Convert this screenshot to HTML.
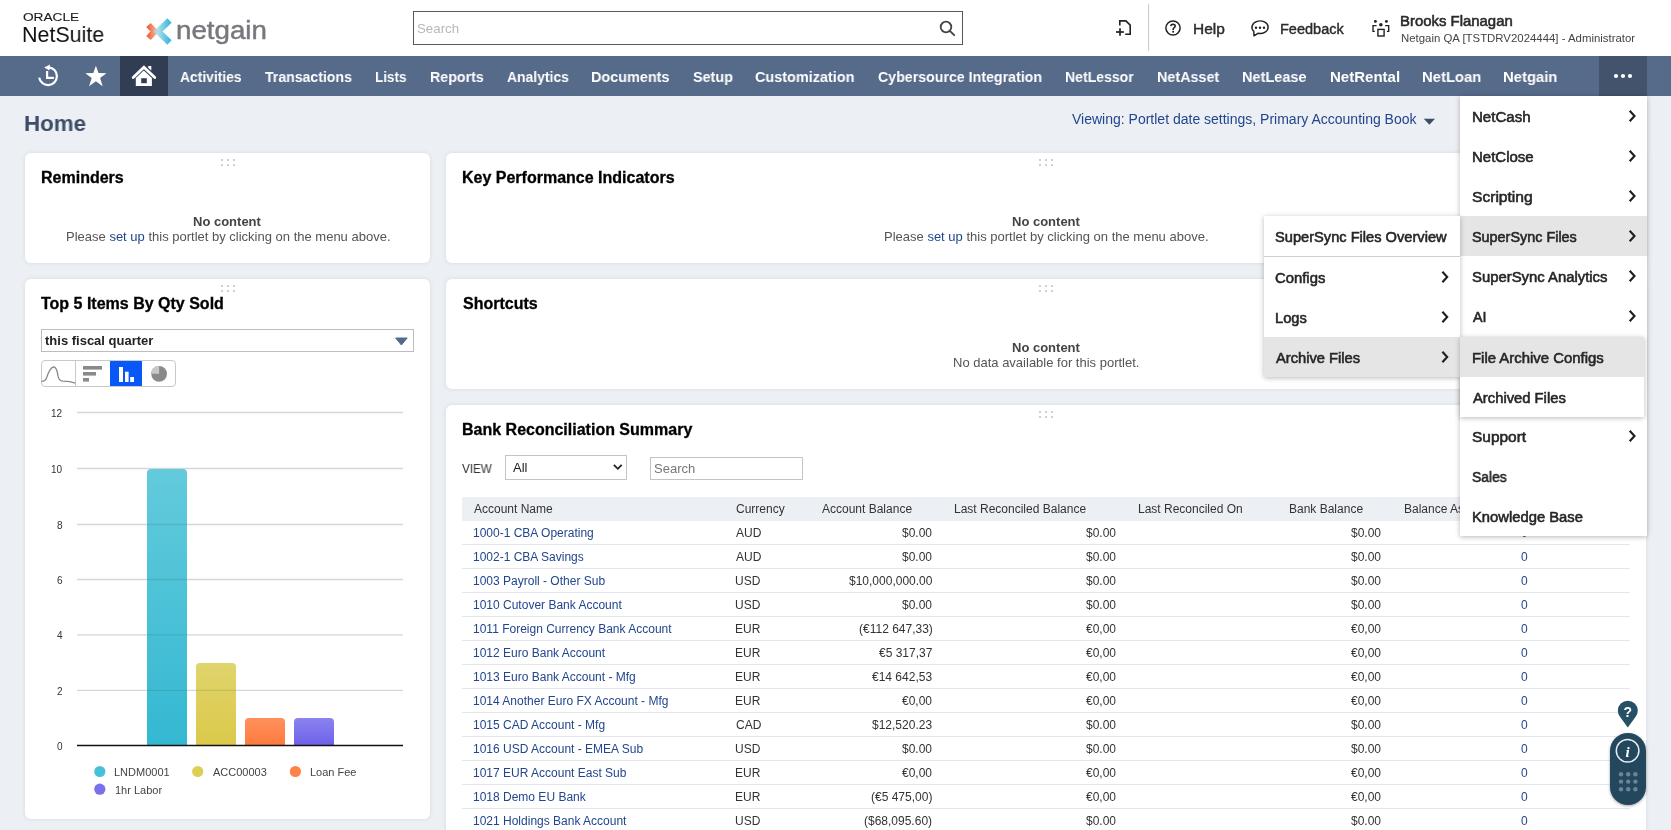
<!DOCTYPE html><html><head><meta charset="utf-8"><style>
*{margin:0;padding:0;box-sizing:border-box}
html,body{width:1671px;height:830px;overflow:hidden;background:#eceff3;font-family:"Liberation Sans",sans-serif}
.t{position:absolute;white-space:nowrap;line-height:1;transform-origin:0 0;will-change:transform}
svg{position:absolute;overflow:visible}
.card{position:absolute;background:#fff;border-radius:6px;box-shadow:0 0 5px rgba(0,0,0,.09)}
</style></head><body>

<div style="position:absolute;left:0px;top:0px;width:1671px;height:56px;background:#fff"></div>
<div class="t " style="left:23.32px;top:13px;font-size:10px;color:#1a1a1a;-webkit-text-stroke:0.1px #1a1a1a;transform:scaleX(1.3648);">ORACLE</div>
<div class="t " style="left:22.29px;top:25px;font-size:21.5px;color:#111;transform:scaleX(0.9967);">NetSuite</div>
<svg style="left:0;top:0" width="300" height="56">
<defs>
<linearGradient id="gb" x1="0" y1="0" x2="1" y2="0"><stop offset="0" stop-color="#a9dbe8"/><stop offset="1" stop-color="#2bb5dd"/></linearGradient>
<linearGradient id="go" x1="0" y1="0" x2="1" y2="0"><stop offset="0" stop-color="#f26838"/><stop offset="1" stop-color="#f5a183"/></linearGradient>
</defs>
<polyline points="148.5,25 154.5,31.5 148.5,38" fill="none" stroke="url(#go)" stroke-width="6.2" stroke-linejoin="miter"/>
<polyline points="169.5,20.5 158,31.5 169.5,42.5" fill="none" stroke="url(#gb)" stroke-width="6.2" stroke-linejoin="miter" opacity="0.92"/>
</svg>
<div class="t " style="left:176.06px;top:18px;font-size:25.5px;color:#76787c;-webkit-text-stroke:0.45px #76787c;transform:scaleX(1.0865);">netgain</div>
<div style="position:absolute;left:413px;top:11px;width:550px;height:34px;border:1.5px solid #5a5a5a;background:#fff"></div>
<div class="t " style="left:416.84px;top:22px;font-size:13px;color:#b8b8b8;transform:scaleX(1.0214);">Search</div>
<svg style="left:0;top:0" width="1" height="1"><circle cx="946" cy="27" r="5.3" fill="none" stroke="#444" stroke-width="1.8"/><line x1="949.8" y1="30.8" x2="954.2" y2="35.2" stroke="#444" stroke-width="1.9" stroke-linecap="round"/></svg>
<svg style="left:0;top:0" width="1" height="1">
<path d="M1119.8,25.6 V20.9 H1125.9 L1130.2,25.2 V34.3 H1125.2" fill="none" stroke="#222" stroke-width="1.6"/>
<line x1="1116" y1="32" x2="1123.9" y2="32" stroke="#222" stroke-width="1.7"/>
<line x1="1120" y1="28.2" x2="1120" y2="35.8" stroke="#222" stroke-width="1.7"/>
<line x1="1148.6" y1="4" x2="1148.6" y2="51" stroke="#c8c8c8" stroke-width="1"/>
<circle cx="1173" cy="28" r="7.1" fill="none" stroke="#222" stroke-width="1.5"/>
<path d="M1170.8,26.1 Q1170.9,24.3 1173.1,24.3 Q1175.3,24.4 1175.2,26.1 Q1175.1,27.2 1173.9,27.9 Q1173.1,28.4 1173.1,29.9" fill="none" stroke="#222" stroke-width="1.6"/>
<circle cx="1173.1" cy="31.7" r="1" fill="#222"/>
<path d="M1253.8,31.25 A8.1,6.3 0 1 1 1257.9,33.3 L1254,35.8 Z" fill="none" stroke="#222" stroke-width="1.45" stroke-linejoin="round"/>
<circle cx="1256" cy="27.7" r="1.2" fill="#222"/><circle cx="1260" cy="27.7" r="1.2" fill="#222"/><circle cx="1264" cy="27.7" r="1.2" fill="#222"/>
<circle cx="1375.4" cy="21.4" r="1.45" fill="#222"/><circle cx="1380.85" cy="24.8" r="1.8" fill="#222"/><circle cx="1386.4" cy="21.4" r="1.45" fill="#222"/>
<path d="M1376.6,25.6 H1373 V31.3 H1374.8" fill="none" stroke="#222" stroke-width="1.35"/>
<path d="M1385.1,25.6 H1388.7 V31.3 H1386.9" fill="none" stroke="#222" stroke-width="1.35"/>
<rect x="1377.9" y="29.4" width="6.2" height="6.6" fill="none" stroke="#222" stroke-width="1.4"/>
</svg>
<div class="t " style="left:1192.76px;top:22px;font-size:14px;color:#2b2b2b;-webkit-text-stroke:0.4px #2b2b2b;transform:scaleX(1.1046);">Help</div>
<div class="t " style="left:1280.24px;top:22px;font-size:14px;color:#2b2b2b;-webkit-text-stroke:0.4px #2b2b2b;transform:scaleX(1.0375);">Feedback</div>
<div class="t " style="left:1400.31px;top:14px;font-size:14px;color:#2b2b2b;-webkit-text-stroke:0.55px #2b2b2b;transform:scaleX(1.0652);">Brooks Flanagan</div>
<div class="t " style="left:1400.59px;top:33px;font-size:11px;color:#444;transform:scaleX(1.0358);">Netgain QA [TSTDRV2024444] - Administrator</div>
<div style="position:absolute;left:0px;top:56px;width:1671px;height:40px;background:#566a8a"></div>
<div style="position:absolute;left:120px;top:56px;width:48px;height:40px;background:#313d52"></div>
<div style="position:absolute;left:1599px;top:56px;width:48px;height:40px;background:#44536c"></div>
<div class="t " style="left:179.58px;top:69px;font-size:15px;color:#fff;font-weight:bold;transform:scaleX(0.9239);">Activities</div>
<div class="t " style="left:265.16px;top:69px;font-size:15px;color:#fff;font-weight:bold;transform:scaleX(0.9390);">Transactions</div>
<div class="t " style="left:375.06px;top:69px;font-size:15px;color:#fff;font-weight:bold;transform:scaleX(0.8969);">Lists</div>
<div class="t " style="left:429.70px;top:69px;font-size:15px;color:#fff;font-weight:bold;transform:scaleX(0.9500);">Reports</div>
<div class="t " style="left:506.58px;top:69px;font-size:15px;color:#fff;font-weight:bold;transform:scaleX(0.9285);">Analytics</div>
<div class="t " style="left:590.99px;top:69px;font-size:15px;color:#fff;font-weight:bold;transform:scaleX(0.9613);">Documents</div>
<div class="t " style="left:692.57px;top:69px;font-size:15px;color:#fff;font-weight:bold;transform:scaleX(0.9594);">Setup</div>
<div class="t " style="left:755.42px;top:69px;font-size:15px;color:#fff;font-weight:bold;transform:scaleX(0.9622);">Customization</div>
<div class="t " style="left:877.83px;top:69px;font-size:15px;color:#fff;font-weight:bold;transform:scaleX(0.9459);">Cybersource Integration</div>
<div class="t " style="left:1065.02px;top:69px;font-size:15px;color:#fff;font-weight:bold;transform:scaleX(0.9369);">NetLessor</div>
<div class="t " style="left:1157.00px;top:69px;font-size:15px;color:#fff;font-weight:bold;transform:scaleX(0.9569);">NetAsset</div>
<div class="t " style="left:1241.98px;top:69px;font-size:15px;color:#fff;font-weight:bold;transform:scaleX(0.9677);">NetLease</div>
<div class="t " style="left:1329.55px;top:69px;font-size:15px;color:#fff;font-weight:bold;transform:scaleX(1.0007);">NetRental</div>
<div class="t " style="left:1421.56px;top:69px;font-size:15px;color:#fff;font-weight:bold;transform:scaleX(0.9888);">NetLoan</div>
<div class="t " style="left:1503.46px;top:69px;font-size:15px;color:#fff;font-weight:bold;transform:scaleX(0.9887);">Netgain</div>
<svg style="left:0;top:0" width="1" height="1">
<path d="M48.6,67.3 A8.9,8.9 0 1 1 39.2,77.6" fill="none" stroke="#fff" stroke-width="2.2"/>
<polygon points="44.2,67.5 50,64.5 49.4,70.4" fill="#fff"/>
<path d="M47.1,71 V77.8 H53.9" fill="none" stroke="#fff" stroke-width="2.2"/>
<polygon points="95.9,65.8 98.5,73.1 106.5,73.2 100.1,78 102.7,86.3 95.9,81.3 89.1,86.3 91.7,78 85.3,73.2 93.3,73.1" fill="#fff"/>
<path d="M133.2,77.6 L143.9,67.3 L154.8,77.6" fill="none" stroke="#fff" stroke-width="2.8" stroke-linecap="round" stroke-linejoin="miter"/>
<polygon points="148.2,66 151.3,66 151.3,70.6 148.2,67.8" fill="#fff"/>
<path d="M135.8,78 L143.8,70.6 L151.9,78 V86 H135.8 Z" fill="#fff"/>
<rect x="141.2" y="78.2" width="5.6" height="5" fill="#313d52"/>
<circle cx="1616" cy="76" r="2.1" fill="#fff"/><circle cx="1623" cy="76" r="2.1" fill="#fff"/><circle cx="1630" cy="76" r="2.1" fill="#fff"/>
</svg>
<div class="t " style="left:24.24px;top:113px;font-size:22.5px;color:#3d4d69;font-weight:bold;transform:scaleX(0.9921);">Home</div>
<div class="t " style="left:1072.26px;top:112px;font-size:14px;color:#22468e;transform:scaleX(1.0001);">Viewing: Portlet date settings, Primary Accounting Book</div>
<svg style="left:0;top:0" width="1" height="1"><polygon points="1423.8,118.7 1435,118.7 1429.4,124.7" fill="#3d4d69"/></svg>
<div class="card" style="left:25px;top:153px;width:405px;height:110px"></div>
<svg style="left:0;top:0" width="1" height="1"><rect x="221" y="159" width="2" height="2" fill="#d0d0d0"/><rect x="221" y="164" width="2" height="2" fill="#d0d0d0"/><rect x="227" y="159" width="2" height="2" fill="#d0d0d0"/><rect x="227" y="164" width="2" height="2" fill="#d0d0d0"/><rect x="233" y="159" width="2" height="2" fill="#d0d0d0"/><rect x="233" y="164" width="2" height="2" fill="#d0d0d0"/></svg>
<div class="t " style="left:40.78px;top:170px;font-size:16px;color:#000;font-weight:bold;-webkit-text-stroke:0.3px #000;transform:scaleX(1.0005);">Reminders</div>
<div class="t " style="left:193.18px;top:215px;font-size:13px;color:#444;font-weight:bold;">No content</div>
<div class="t" style="left:66px;top:230px;font-size:13px;color:#555">Please <span style="color:#22468e">set up</span> this portlet by clicking on the menu above.</div>
<div class="card" style="left:446px;top:153px;width:1200px;height:110px"></div>
<svg style="left:0;top:0" width="1" height="1"><rect x="1039" y="159" width="2" height="2" fill="#d0d0d0"/><rect x="1039" y="164" width="2" height="2" fill="#d0d0d0"/><rect x="1045" y="159" width="2" height="2" fill="#d0d0d0"/><rect x="1045" y="164" width="2" height="2" fill="#d0d0d0"/><rect x="1051" y="159" width="2" height="2" fill="#d0d0d0"/><rect x="1051" y="164" width="2" height="2" fill="#d0d0d0"/></svg>
<div class="t " style="left:461.98px;top:170px;font-size:16px;color:#000;font-weight:bold;-webkit-text-stroke:0.3px #000;">Key Performance Indicators</div>
<div class="t " style="left:1011.68px;top:215px;font-size:13px;color:#444;font-weight:bold;">No content</div>
<div class="t" style="left:883.70px;top:230px;font-size:13px;color:#555">Please <span style="color:#22468e">set up</span> this portlet by clicking on the menu above.</div>
<div class="card" style="left:25px;top:279px;width:405px;height:540px"></div>
<svg style="left:0;top:0" width="1" height="1"><rect x="221" y="285" width="2" height="2" fill="#d0d0d0"/><rect x="221" y="290" width="2" height="2" fill="#d0d0d0"/><rect x="227" y="285" width="2" height="2" fill="#d0d0d0"/><rect x="227" y="290" width="2" height="2" fill="#d0d0d0"/><rect x="233" y="285" width="2" height="2" fill="#d0d0d0"/><rect x="233" y="290" width="2" height="2" fill="#d0d0d0"/></svg>
<div class="t " style="left:41.14px;top:296px;font-size:16px;color:#000;font-weight:bold;-webkit-text-stroke:0.3px #000;">Top 5 Items By Qty Sold</div>
<div style="position:absolute;left:41px;top:329px;width:373px;height:23px;border:1px solid #bdbdbd;background:#fff"></div>
<div class="t " style="left:45.17px;top:334px;font-size:13px;color:#222;font-weight:bold;">this fiscal quarter</div>
<svg style="left:0;top:0" width="1" height="1"><polygon points="395.6,338 407.2,338 401.4,345" fill="#546a8c" stroke="#546a8c" stroke-width="1" stroke-linejoin="round"/></svg>
<div style="position:absolute;left:41px;top:360px;width:135px;height:27px;border:1px solid #c9c9c9;border-radius:4px;background:#fff;overflow:hidden">
<div style="position:absolute;left:68px;top:0;width:32px;height:27px;background:#0a57f7"></div>
<div style="position:absolute;left:33px;top:0;width:1px;height:27px;background:#c9c9c9"></div>
</div>
<svg style="left:0;top:0" width="1" height="1">
<path d="M41.5,381.3 C44,381.3 45.5,381 46.5,378 C48.5,372 50.5,367 53.5,367 C56.5,367 57.5,372 58,376 C58.5,379 60,381 63,381.2 C68,381.3 72,382 75.2,383.2" fill="none" stroke="#8a8a8a" stroke-width="1.3"/>
<rect x="83" y="366" width="19" height="3.6" fill="#8a8a8a"/>
<rect x="83" y="372" width="13" height="3.6" fill="#8a8a8a"/>
<rect x="83" y="378" width="6" height="3.6" fill="#8a8a8a"/>
<rect x="119" y="367" width="4" height="15" fill="#fff"/>
<rect x="125" y="371.7" width="3.6" height="10.3" fill="#fff"/>
<rect x="130.2" y="377" width="3.8" height="5" fill="#fff"/>
<circle cx="159.1" cy="373.8" r="7.9" fill="#8a8a8a"/>
<path d="M159.1,373.8 V365.9 A7.9,7.9 0 0 0 151.2,373.8 Z" fill="#c8c8c8"/>
</svg>
<svg style="left:0;top:0" width="1" height="1"><defs>
<linearGradient id="b1" x1="0" y1="0" x2="0" y2="1"><stop offset="0" stop-color="#63cbdc"/><stop offset="1" stop-color="#34b8d2"/></linearGradient>
<linearGradient id="b2" x1="0" y1="0" x2="0" y2="1"><stop offset="0" stop-color="#e0d46c"/><stop offset="1" stop-color="#dbc94a"/></linearGradient>
<linearGradient id="b3" x1="0" y1="0" x2="0" y2="1"><stop offset="0" stop-color="#ff915e"/><stop offset="1" stop-color="#fd7a3d"/></linearGradient>
<linearGradient id="b4" x1="0" y1="0" x2="0" y2="1"><stop offset="0" stop-color="#8b84ee"/><stop offset="1" stop-color="#6d60ea"/></linearGradient>
</defs><line x1="77" y1="412.5" x2="403" y2="412.5" stroke="#d3d8d4" stroke-width="1.3"/><line x1="77" y1="468.5" x2="403" y2="468.5" stroke="#d3d8d4" stroke-width="1.3"/><line x1="77" y1="524.5" x2="403" y2="524.5" stroke="#d3d8d4" stroke-width="1.3"/><line x1="77" y1="579.5" x2="403" y2="579.5" stroke="#d3d8d4" stroke-width="1.3"/><line x1="77" y1="634.8" x2="403" y2="634.8" stroke="#d3d8d4" stroke-width="1.3"/><line x1="77" y1="690.3" x2="403" y2="690.3" stroke="#d3d8d4" stroke-width="1.3"/></svg>
<div class="t " style="left:51.30px;top:409px;font-size:10px;color:#333;">12</div>
<div class="t " style="left:51.20px;top:465px;font-size:10px;color:#333;">10</div>
<div class="t " style="left:56.90px;top:521px;font-size:10px;color:#333;">8</div>
<div class="t " style="left:56.90px;top:576px;font-size:10px;color:#333;">6</div>
<div class="t " style="left:56.70px;top:631px;font-size:10px;color:#333;">4</div>
<div class="t " style="left:56.90px;top:687px;font-size:10px;color:#333;">2</div>
<div class="t " style="left:56.80px;top:742px;font-size:10px;color:#333;">0</div>
<svg style="left:0;top:0" width="1" height="1"><path d="M147,745.4 V473 Q147,469 151,469 H183 Q187,469 187,473 V745.4 Z" fill="url(#b1)"/></svg>
<svg style="left:0;top:0" width="1" height="1"><path d="M196,745.4 V667 Q196,663 200,663 H232 Q236,663 236,667 V745.4 Z" fill="url(#b2)"/></svg>
<svg style="left:0;top:0" width="1" height="1"><path d="M245,745.4 V722 Q245,718 249,718 H281 Q285,718 285,722 V745.4 Z" fill="url(#b3)"/></svg>
<svg style="left:0;top:0" width="1" height="1"><path d="M294,745.4 V722 Q294,718 298,718 H330 Q334,718 334,722 V745.4 Z" fill="url(#b4)"/></svg>
<svg style="left:0;top:0" width="1" height="1"><line x1="147" y1="524.5" x2="187" y2="524.5" stroke="rgba(30,60,50,.13)" stroke-width="1.3"/><line x1="147" y1="579.5" x2="187" y2="579.5" stroke="rgba(30,60,50,.13)" stroke-width="1.3"/><line x1="147" y1="634.8" x2="187" y2="634.8" stroke="rgba(30,60,50,.13)" stroke-width="1.3"/><line x1="147" y1="690.3" x2="187" y2="690.3" stroke="rgba(30,60,50,.13)" stroke-width="1.3"/><line x1="196" y1="690.3" x2="236" y2="690.3" stroke="rgba(30,60,50,.13)" stroke-width="1.3"/></svg>
<svg style="left:0;top:0" width="1" height="1"><line x1="77" y1="745.5" x2="403" y2="745.5" stroke="#111" stroke-width="1.4"/></svg>
<svg style="left:0;top:0" width="1" height="1"><circle cx="99.8" cy="771.5" r="5.6" fill="#45c2d7"/><circle cx="197.7" cy="771.5" r="5.6" fill="#ddcf55"/><circle cx="295.4" cy="771.5" r="5.6" fill="#fe8349"/><circle cx="99.8" cy="789.2" r="5.6" fill="#7a70ec"/></svg>
<div class="t " style="left:114.32px;top:767px;font-size:11px;color:#444;">LNDM0001</div>
<div class="t " style="left:213.00px;top:767px;font-size:11px;color:#444;">ACC00003</div>
<div class="t " style="left:309.62px;top:767px;font-size:11px;color:#444;">Loan Fee</div>
<div class="t " style="left:114.62px;top:785px;font-size:11px;color:#444;">1hr Labor</div>
<div class="card" style="left:446px;top:279px;width:1200px;height:110px"></div>
<svg style="left:0;top:0" width="1" height="1"><rect x="1039" y="285" width="2" height="2" fill="#d0d0d0"/><rect x="1039" y="290" width="2" height="2" fill="#d0d0d0"/><rect x="1045" y="285" width="2" height="2" fill="#d0d0d0"/><rect x="1045" y="290" width="2" height="2" fill="#d0d0d0"/><rect x="1051" y="285" width="2" height="2" fill="#d0d0d0"/><rect x="1051" y="290" width="2" height="2" fill="#d0d0d0"/></svg>
<div class="t " style="left:462.62px;top:296px;font-size:16px;color:#000;font-weight:bold;-webkit-text-stroke:0.3px #000;">Shortcuts</div>
<div class="t " style="left:1011.68px;top:341px;font-size:13px;color:#444;font-weight:bold;">No content</div>
<div class="t " style="left:952.86px;top:356px;font-size:13px;color:#555;">No data available for this portlet.</div>
<div class="card" style="left:446px;top:405px;width:1200px;height:500px"></div>
<svg style="left:0;top:0" width="1" height="1"><rect x="1039" y="411" width="2" height="2" fill="#d0d0d0"/><rect x="1039" y="416" width="2" height="2" fill="#d0d0d0"/><rect x="1045" y="411" width="2" height="2" fill="#d0d0d0"/><rect x="1045" y="416" width="2" height="2" fill="#d0d0d0"/><rect x="1051" y="411" width="2" height="2" fill="#d0d0d0"/><rect x="1051" y="416" width="2" height="2" fill="#d0d0d0"/></svg>
<div class="t " style="left:461.58px;top:422px;font-size:16px;color:#000;font-weight:bold;-webkit-text-stroke:0.3px #000;">Bank Reconciliation Summary</div>
<div class="t " style="left:462.38px;top:463px;font-size:12px;color:#333;transform:scaleX(0.9744);">VIEW</div>
<div style="position:absolute;left:505px;top:455px;width:122px;height:25px;border:1px solid #c4c4c4;background:#fff"></div>
<div class="t " style="left:513.00px;top:461px;font-size:13px;color:#222;">All</div>
<svg style="left:0;top:0" width="1" height="1"><path d="M613.9,464.8 L617.8,468.8 L621.7,464.8" fill="none" stroke="#222" stroke-width="1.8"/></svg>
<div style="position:absolute;left:650px;top:457px;width:153px;height:23px;border:1px solid #c4c4c4;background:#fff"></div>
<div class="t " style="left:654.05px;top:462px;font-size:13px;color:#777;">Search</div>
<div style="position:absolute;left:462px;top:497px;width:1168px;height:24px;background:#eceff4"></div>
<div class="t " style="left:473.80px;top:503px;font-size:12px;color:#333;">Account Name</div>
<div class="t " style="left:736.00px;top:503px;font-size:12px;color:#333;">Currency</div>
<div class="t " style="left:821.50px;top:503px;font-size:12px;color:#333;">Account Balance</div>
<div class="t " style="left:954.24px;top:503px;font-size:12px;color:#333;">Last Reconciled Balance</div>
<div class="t " style="left:1138.04px;top:503px;font-size:12px;color:#333;">Last Reconciled On</div>
<div class="t " style="left:1289.04px;top:503px;font-size:12px;color:#333;">Bank Balance</div>
<div class="t " style="left:1403.84px;top:503px;font-size:12px;color:#333;">Balance As Of</div>
<svg style="left:0;top:0" width="1" height="1"><line x1="462" y1="544.5" x2="1630" y2="544.5" stroke="#e3e6ec" stroke-width="1"/><line x1="462" y1="568.5" x2="1630" y2="568.5" stroke="#e3e6ec" stroke-width="1"/><line x1="462" y1="592.5" x2="1630" y2="592.5" stroke="#e3e6ec" stroke-width="1"/><line x1="462" y1="616.5" x2="1630" y2="616.5" stroke="#e3e6ec" stroke-width="1"/><line x1="462" y1="640.5" x2="1630" y2="640.5" stroke="#e3e6ec" stroke-width="1"/><line x1="462" y1="664.5" x2="1630" y2="664.5" stroke="#e3e6ec" stroke-width="1"/><line x1="462" y1="688.5" x2="1630" y2="688.5" stroke="#e3e6ec" stroke-width="1"/><line x1="462" y1="712.5" x2="1630" y2="712.5" stroke="#e3e6ec" stroke-width="1"/><line x1="462" y1="736.5" x2="1630" y2="736.5" stroke="#e3e6ec" stroke-width="1"/><line x1="462" y1="760.5" x2="1630" y2="760.5" stroke="#e3e6ec" stroke-width="1"/><line x1="462" y1="784.5" x2="1630" y2="784.5" stroke="#e3e6ec" stroke-width="1"/><line x1="462" y1="808.5" x2="1630" y2="808.5" stroke="#e3e6ec" stroke-width="1"/><line x1="462" y1="832.5" x2="1630" y2="832.5" stroke="#e3e6ec" stroke-width="1"/><line x1="462" y1="856.5" x2="1630" y2="856.5" stroke="#e3e6ec" stroke-width="1"/></svg>
<div class="t " style="left:473.24px;top:527px;font-size:12px;color:#22468e;">1000-1 CBA Operating</div>
<div class="t " style="left:736.30px;top:527px;font-size:12px;color:#333;">AUD</div>
<div class="t " style="left:902.16px;top:527px;font-size:12px;color:#333;">$0.00</div>
<div class="t " style="left:1085.56px;top:527px;font-size:12px;color:#333;">$0.00</div>
<div class="t " style="left:1351.36px;top:527px;font-size:12px;color:#333;">$0.00</div>
<div class="t " style="left:1520.82px;top:527px;font-size:12px;color:#22468e;">0</div>
<div class="t " style="left:473.24px;top:551px;font-size:12px;color:#22468e;">1002-1 CBA Savings</div>
<div class="t " style="left:736.30px;top:551px;font-size:12px;color:#333;">AUD</div>
<div class="t " style="left:902.16px;top:551px;font-size:12px;color:#333;">$0.00</div>
<div class="t " style="left:1085.56px;top:551px;font-size:12px;color:#333;">$0.00</div>
<div class="t " style="left:1351.36px;top:551px;font-size:12px;color:#333;">$0.00</div>
<div class="t " style="left:1520.82px;top:551px;font-size:12px;color:#22468e;">0</div>
<div class="t " style="left:473.24px;top:575px;font-size:12px;color:#22468e;">1003 Payroll - Other Sub</div>
<div class="t " style="left:735.34px;top:575px;font-size:12px;color:#333;">USD</div>
<div class="t " style="left:848.88px;top:575px;font-size:12px;color:#333;">$10,000,000.00</div>
<div class="t " style="left:1085.56px;top:575px;font-size:12px;color:#333;">$0.00</div>
<div class="t " style="left:1351.36px;top:575px;font-size:12px;color:#333;">$0.00</div>
<div class="t " style="left:1520.82px;top:575px;font-size:12px;color:#22468e;">0</div>
<div class="t " style="left:473.24px;top:599px;font-size:12px;color:#22468e;">1010 Cutover Bank Account</div>
<div class="t " style="left:735.34px;top:599px;font-size:12px;color:#333;">USD</div>
<div class="t " style="left:902.16px;top:599px;font-size:12px;color:#333;">$0.00</div>
<div class="t " style="left:1085.56px;top:599px;font-size:12px;color:#333;">$0.00</div>
<div class="t " style="left:1351.36px;top:599px;font-size:12px;color:#333;">$0.00</div>
<div class="t " style="left:1520.82px;top:599px;font-size:12px;color:#22468e;">0</div>
<div class="t " style="left:473.24px;top:623px;font-size:12px;color:#22468e;">1011 Foreign Currency Bank Account</div>
<div class="t " style="left:735.34px;top:623px;font-size:12px;color:#333;">EUR</div>
<div class="t " style="left:858.72px;top:623px;font-size:12px;color:#333;">(€112 647,33)</div>
<div class="t " style="left:1085.56px;top:623px;font-size:12px;color:#333;">€0,00</div>
<div class="t " style="left:1351.36px;top:623px;font-size:12px;color:#333;">€0,00</div>
<div class="t " style="left:1520.82px;top:623px;font-size:12px;color:#22468e;">0</div>
<div class="t " style="left:473.24px;top:647px;font-size:12px;color:#22468e;">1012 Euro Bank Account</div>
<div class="t " style="left:735.34px;top:647px;font-size:12px;color:#333;">EUR</div>
<div class="t " style="left:879.00px;top:647px;font-size:12px;color:#333;">€5 317,37</div>
<div class="t " style="left:1085.56px;top:647px;font-size:12px;color:#333;">€0,00</div>
<div class="t " style="left:1351.36px;top:647px;font-size:12px;color:#333;">€0,00</div>
<div class="t " style="left:1520.82px;top:647px;font-size:12px;color:#22468e;">0</div>
<div class="t " style="left:473.24px;top:671px;font-size:12px;color:#22468e;">1013 Euro Bank Account - Mfg</div>
<div class="t " style="left:735.34px;top:671px;font-size:12px;color:#333;">EUR</div>
<div class="t " style="left:872.28px;top:671px;font-size:12px;color:#333;">€14 642,53</div>
<div class="t " style="left:1085.56px;top:671px;font-size:12px;color:#333;">€0,00</div>
<div class="t " style="left:1351.36px;top:671px;font-size:12px;color:#333;">€0,00</div>
<div class="t " style="left:1520.82px;top:671px;font-size:12px;color:#22468e;">0</div>
<div class="t " style="left:473.24px;top:695px;font-size:12px;color:#22468e;">1014 Another Euro FX Account - Mfg</div>
<div class="t " style="left:735.34px;top:695px;font-size:12px;color:#333;">EUR</div>
<div class="t " style="left:902.16px;top:695px;font-size:12px;color:#333;">€0,00</div>
<div class="t " style="left:1085.56px;top:695px;font-size:12px;color:#333;">€0,00</div>
<div class="t " style="left:1351.36px;top:695px;font-size:12px;color:#333;">€0,00</div>
<div class="t " style="left:1520.82px;top:695px;font-size:12px;color:#22468e;">0</div>
<div class="t " style="left:473.24px;top:719px;font-size:12px;color:#22468e;">1015 CAD Account - Mfg</div>
<div class="t " style="left:735.70px;top:719px;font-size:12px;color:#333;">CAD</div>
<div class="t " style="left:872.28px;top:719px;font-size:12px;color:#333;">$12,520.23</div>
<div class="t " style="left:1085.56px;top:719px;font-size:12px;color:#333;">$0.00</div>
<div class="t " style="left:1351.36px;top:719px;font-size:12px;color:#333;">$0.00</div>
<div class="t " style="left:1520.82px;top:719px;font-size:12px;color:#22468e;">0</div>
<div class="t " style="left:473.24px;top:743px;font-size:12px;color:#22468e;">1016 USD Account - EMEA Sub</div>
<div class="t " style="left:735.34px;top:743px;font-size:12px;color:#333;">USD</div>
<div class="t " style="left:902.16px;top:743px;font-size:12px;color:#333;">$0.00</div>
<div class="t " style="left:1085.56px;top:743px;font-size:12px;color:#333;">$0.00</div>
<div class="t " style="left:1351.36px;top:743px;font-size:12px;color:#333;">$0.00</div>
<div class="t " style="left:1520.82px;top:743px;font-size:12px;color:#22468e;">0</div>
<div class="t " style="left:473.24px;top:767px;font-size:12px;color:#22468e;">1017 EUR Account East Sub</div>
<div class="t " style="left:735.34px;top:767px;font-size:12px;color:#333;">EUR</div>
<div class="t " style="left:902.16px;top:767px;font-size:12px;color:#333;">€0,00</div>
<div class="t " style="left:1085.56px;top:767px;font-size:12px;color:#333;">€0,00</div>
<div class="t " style="left:1351.36px;top:767px;font-size:12px;color:#333;">€0,00</div>
<div class="t " style="left:1520.82px;top:767px;font-size:12px;color:#22468e;">0</div>
<div class="t " style="left:473.24px;top:791px;font-size:12px;color:#22468e;">1018 Demo EU Bank</div>
<div class="t " style="left:735.34px;top:791px;font-size:12px;color:#333;">EUR</div>
<div class="t " style="left:871.20px;top:791px;font-size:12px;color:#333;">(€5 475,00)</div>
<div class="t " style="left:1085.56px;top:791px;font-size:12px;color:#333;">€0,00</div>
<div class="t " style="left:1351.36px;top:791px;font-size:12px;color:#333;">€0,00</div>
<div class="t " style="left:1520.82px;top:791px;font-size:12px;color:#22468e;">0</div>
<div class="t " style="left:473.24px;top:815px;font-size:12px;color:#22468e;">1021 Holdings Bank Account</div>
<div class="t " style="left:735.34px;top:815px;font-size:12px;color:#333;">USD</div>
<div class="t " style="left:864.48px;top:815px;font-size:12px;color:#333;">($68,095.60)</div>
<div class="t " style="left:1085.56px;top:815px;font-size:12px;color:#333;">$0.00</div>
<div class="t " style="left:1351.36px;top:815px;font-size:12px;color:#333;">$0.00</div>
<div class="t " style="left:1520.82px;top:815px;font-size:12px;color:#22468e;">0</div>
<div class="t " style="left:473.24px;top:839px;font-size:12px;color:#22468e;">1022 Test Account</div>
<div class="t " style="left:735.34px;top:839px;font-size:12px;color:#333;">USD</div>
<div class="t " style="left:902.16px;top:839px;font-size:12px;color:#333;">$0.00</div>
<div class="t " style="left:1085.56px;top:839px;font-size:12px;color:#333;">$0.00</div>
<div class="t " style="left:1351.36px;top:839px;font-size:12px;color:#333;">$0.00</div>
<div class="t " style="left:1520.82px;top:839px;font-size:12px;color:#22468e;">0</div>
<svg style="left:0;top:0" width="1" height="1">
<path d="M1627.8,727.5 L1620.5,717.5 A10,10 0 1 1 1635.1,717.5 Z" fill="#265066"/>
<text x="1627.8" y="716.5" font-family="Liberation Sans" font-weight="bold" font-size="14" fill="#fff" text-anchor="middle">?</text>
</svg>
<div style="position:absolute;left:1610px;top:733px;width:36px;height:72px;border-radius:18px;background:#23475d;box-shadow:0 1px 3px rgba(0,0,0,.35)"></div>
<svg style="left:0;top:0" width="1" height="1">
<circle cx="1627.6" cy="750.8" r="11.3" fill="none" stroke="#e8eef2" stroke-width="1.5"/>
<text x="1627.6" y="756.5" font-family="Liberation Serif" font-style="italic" font-weight="bold" font-size="15" fill="#fff" text-anchor="middle">i</text>
<circle cx="1621" cy="774.2" r="2.2" fill="#6c8595"/><circle cx="1621" cy="781.6" r="2.2" fill="#6c8595"/><circle cx="1621" cy="789.2" r="2.2" fill="#6c8595"/><circle cx="1628.2" cy="774.2" r="2.2" fill="#6c8595"/><circle cx="1628.2" cy="781.6" r="2.2" fill="#6c8595"/><circle cx="1628.2" cy="789.2" r="2.2" fill="#6c8595"/><circle cx="1635.4" cy="774.2" r="2.2" fill="#6c8595"/><circle cx="1635.4" cy="781.6" r="2.2" fill="#6c8595"/><circle cx="1635.4" cy="789.2" r="2.2" fill="#6c8595"/>
</svg>
<div style="position:absolute;left:1460px;top:96px;width:187px;height:440px;background:#fff;box-shadow:0 1px 5px rgba(0,0,0,.28)"></div>
<div style="position:absolute;left:1460px;top:216px;width:187px;height:40px;background:#e5e5e5"></div>
<div class="t " style="left:1471.70px;top:110px;font-size:14px;color:#262626;-webkit-text-stroke:0.55px #262626;transform:scaleX(1.0752);">NetCash</div>
<div class="t " style="left:1471.70px;top:150px;font-size:14px;color:#262626;-webkit-text-stroke:0.55px #262626;transform:scaleX(1.0705);">NetClose</div>
<div class="t " style="left:1472.12px;top:190px;font-size:14px;color:#262626;-webkit-text-stroke:0.55px #262626;transform:scaleX(1.1141);">Scripting</div>
<div class="t " style="left:1472.18px;top:230px;font-size:14px;color:#262626;-webkit-text-stroke:0.55px #262626;transform:scaleX(1.0282);">SuperSync Files</div>
<div class="t " style="left:1472.16px;top:270px;font-size:14px;color:#262626;-webkit-text-stroke:0.55px #262626;transform:scaleX(1.0615);">SuperSync Analytics</div>
<div class="t " style="left:1472.90px;top:310px;font-size:14px;color:#262626;-webkit-text-stroke:0.55px #262626;transform:scaleX(1.0216);">AI</div>
<div class="t " style="left:1472.13px;top:430px;font-size:14px;color:#262626;-webkit-text-stroke:0.55px #262626;transform:scaleX(1.1047);">Support</div>
<div class="t " style="left:1472.21px;top:470px;font-size:14px;color:#262626;-webkit-text-stroke:0.55px #262626;transform:scaleX(0.9899);">Sales</div>
<div class="t " style="left:1471.72px;top:510px;font-size:14px;color:#262626;-webkit-text-stroke:0.55px #262626;transform:scaleX(1.0559);">Knowledge Base</div>
<svg style="left:0;top:0" width="1" height="1"><path d="M1629.7,110.8 L1634.5,116 L1629.7,121.2" fill="none" stroke="#1e1e1e" stroke-width="2.1" stroke-linecap="butt"/><path d="M1629.7,150.8 L1634.5,156 L1629.7,161.2" fill="none" stroke="#1e1e1e" stroke-width="2.1" stroke-linecap="butt"/><path d="M1629.7,190.8 L1634.5,196 L1629.7,201.2" fill="none" stroke="#1e1e1e" stroke-width="2.1" stroke-linecap="butt"/><path d="M1629.7,230.8 L1634.5,236 L1629.7,241.2" fill="none" stroke="#1e1e1e" stroke-width="2.1" stroke-linecap="butt"/><path d="M1629.7,270.8 L1634.5,276 L1629.7,281.2" fill="none" stroke="#1e1e1e" stroke-width="2.1" stroke-linecap="butt"/><path d="M1629.7,310.8 L1634.5,316 L1629.7,321.2" fill="none" stroke="#1e1e1e" stroke-width="2.1" stroke-linecap="butt"/><path d="M1629.7,430.8 L1634.5,436 L1629.7,441.2" fill="none" stroke="#1e1e1e" stroke-width="2.1" stroke-linecap="butt"/></svg>
<div style="position:absolute;left:1264px;top:216px;width:196px;height:161px;background:#fff;box-shadow:0 1px 5px rgba(0,0,0,.28)"></div>
<div style="position:absolute;left:1264px;top:256px;width:196px;height:1px;background:#cfcfcf"></div>
<div style="position:absolute;left:1264px;top:337px;width:196px;height:40px;background:#e5e5e5"></div>
<div class="t " style="left:1275.47px;top:230px;font-size:14px;color:#262626;-webkit-text-stroke:0.55px #262626;transform:scaleX(1.0454);">SuperSync Files Overview</div>
<div class="t " style="left:1275.46px;top:271px;font-size:14px;color:#262626;-webkit-text-stroke:0.55px #262626;transform:scaleX(1.0606);">Configs</div>
<div class="t " style="left:1275.03px;top:311px;font-size:14px;color:#262626;-webkit-text-stroke:0.55px #262626;transform:scaleX(1.0453);">Logs</div>
<div class="t " style="left:1276.20px;top:351px;font-size:14px;color:#262626;-webkit-text-stroke:0.55px #262626;transform:scaleX(1.0501);">Archive Files</div>
<svg style="left:0;top:0" width="1" height="1"><path d="M1442.4,271.8 L1447.2,277 L1442.4,282.2" fill="none" stroke="#1e1e1e" stroke-width="2.1" stroke-linecap="butt"/><path d="M1442.4,311.8 L1447.2,317 L1442.4,322.2" fill="none" stroke="#1e1e1e" stroke-width="2.1" stroke-linecap="butt"/><path d="M1442.4,351.8 L1447.2,357 L1442.4,362.2" fill="none" stroke="#1e1e1e" stroke-width="2.1" stroke-linecap="butt"/></svg>
<div style="position:absolute;left:1460px;top:337px;width:184px;height:80px;background:#fff;box-shadow:0 1px 5px rgba(0,0,0,.28)"></div>
<div style="position:absolute;left:1460px;top:337px;width:184px;height:40px;background:#e5e5e5"></div>
<div class="t " style="left:1471.71px;top:351px;font-size:14px;color:#262626;-webkit-text-stroke:0.55px #262626;transform:scaleX(1.0649);">File Archive Configs</div>
<div class="t " style="left:1472.90px;top:391px;font-size:14px;color:#262626;-webkit-text-stroke:0.55px #262626;transform:scaleX(1.0554);">Archived Files</div>
</body></html>
